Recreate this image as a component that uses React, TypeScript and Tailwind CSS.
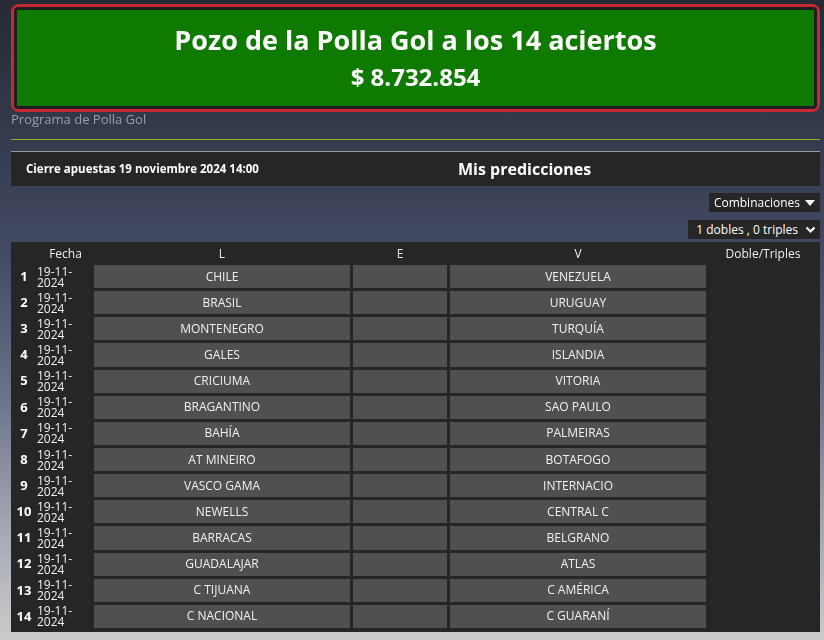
import React from 'react';

const partidos = [
  ['CHILE', 'VENEZUELA'],
  ['BRASIL', 'URUGUAY'],
  ['MONTENEGRO', 'TURQUÍA'],
  ['GALES', 'ISLANDIA'],
  ['CRICIUMA', 'VITORIA'],
  ['BRAGANTINO', 'SAO PAULO'],
  ['BAHÍA', 'PALMEIRAS'],
  ['AT MINEIRO', 'BOTAFOGO'],
  ['VASCO GAMA', 'INTERNACIO'],
  ['NEWELLS', 'CENTRAL C'],
  ['BARRACAS', 'BELGRANO'],
  ['GUADALAJAR', 'ATLAS'],
  ['C TIJUANA', 'C AMÉRICA'],
  ['C NACIONAL', 'C GUARANÍ'],
];

export default function App() {
  return (
    <div
      className="min-h-[640px] w-full pl-[11px] pr-[4px] pt-[4px] text-white"
      style={{ fontFamily: '"Open Sans", "Liberation Sans", sans-serif' }}
    >
      <div className="fixed inset-0 -z-10 bg-[linear-gradient(180deg,#262a35_0%,#343a4c_20%,#434b64_40%,#6b7388_62%,#a3a7b3_82%,#cbcbcb_100%)]" />

      {/* Pozo */}
      <div className="rounded-[8px] bg-[#c42a33] p-[3px]">
        <div className="rounded-[4px] bg-[#1f1f1f] p-[3px]">
          <div className="flex h-[96px] flex-col items-center bg-[#0e7a00] pt-[13px]">
            <div className="text-[27px] font-bold leading-[34px]">Pozo de la Polla Gol a los 14 aciertos</div>
            <div className="mt-[4px] text-[24px] font-bold leading-[32px]">$ 8.732.854</div>
          </div>
        </div>
      </div>

      <div className="-mt-[1px] text-[13px] leading-[16px] text-[#9b9ea6]">Programa de Polla Gol</div>
      <div className="mt-[12px] h-px bg-[#8fb321]" />

      {/* Barra */}
      <div className="mt-[11px] flex h-[35px] items-center border-t border-[#9a9a9a] bg-[#262626]">
        <div className="w-[340px] pl-[15px] text-[11.5px] font-bold">Cierre apuestas 19 noviembre 2024 14:00</div>
        <div className="flex-1 pl-[107px] text-[16px] font-bold">Mis predicciones</div>
      </div>

      <div className="mt-[7px] flex flex-col items-end gap-[8px]">
        <div className="flex h-[19px] items-center gap-[5px] bg-[#262626] pl-[5px] pr-[5px] text-[12px]">
          Combinaciones
          <svg width="10" height="6" viewBox="0 0 10 6"><path d="M0 0h10L5 6z" fill="#fff" /></svg>
        </div>
        <div className="flex h-[19px] items-center gap-[7px] bg-[#262626] pl-[8px] pr-[4px] text-[12px]">
          1 dobles , 0 triples
          <svg width="11" height="8" viewBox="0 0 11 8"><path d="M1.5 1.5l4 4 4-4" stroke="#fff" strokeWidth="2.2" fill="none" /></svg>
        </div>
      </div>

      {/* Tabla */}
      <div className="mt-[3px] bg-[#262626] pb-[4px] pt-[1px] text-[12px]">
        <div className="flex h-[21px] items-center text-[#eeeeee]">
          <div className="w-[26px]" />
          <div className="w-[57px] text-center">Fecha</div>
          <div className="w-[256px] text-center">L</div>
          <div className="w-[3px]" />
          <div className="w-[94px] text-center">E</div>
          <div className="w-[3px]" />
          <div className="w-[256px] text-center">V</div>
          <div className="flex-1 text-center">Doble/Triples</div>
        </div>
        <div className="flex flex-col gap-[3px] pt-[1px]">
          {partidos.map(([l, v], i) => (
            <div key={i} className="flex h-[23.15px] items-center">
              <div className="w-[26px] text-center text-[13px] font-bold">{i + 1}</div>
              <div className="w-[57px] text-[12px] leading-[11px] text-[#f2f2f2]">
                19-11-
                <br />
                2024
              </div>
              <div className="flex h-full w-[256px] items-center justify-center bg-[#505050] text-[#f0f0f0]">{l}</div>
              <div className="w-[3px]" />
              <div className="h-full w-[94px] bg-[#505050]" />
              <div className="w-[3px]" />
              <div className="flex h-full w-[256px] items-center justify-center bg-[#505050] text-[#f0f0f0]">{v}</div>
              <div className="flex-1" />
            </div>
          ))}
        </div>
      </div>
    </div>
  );
}
